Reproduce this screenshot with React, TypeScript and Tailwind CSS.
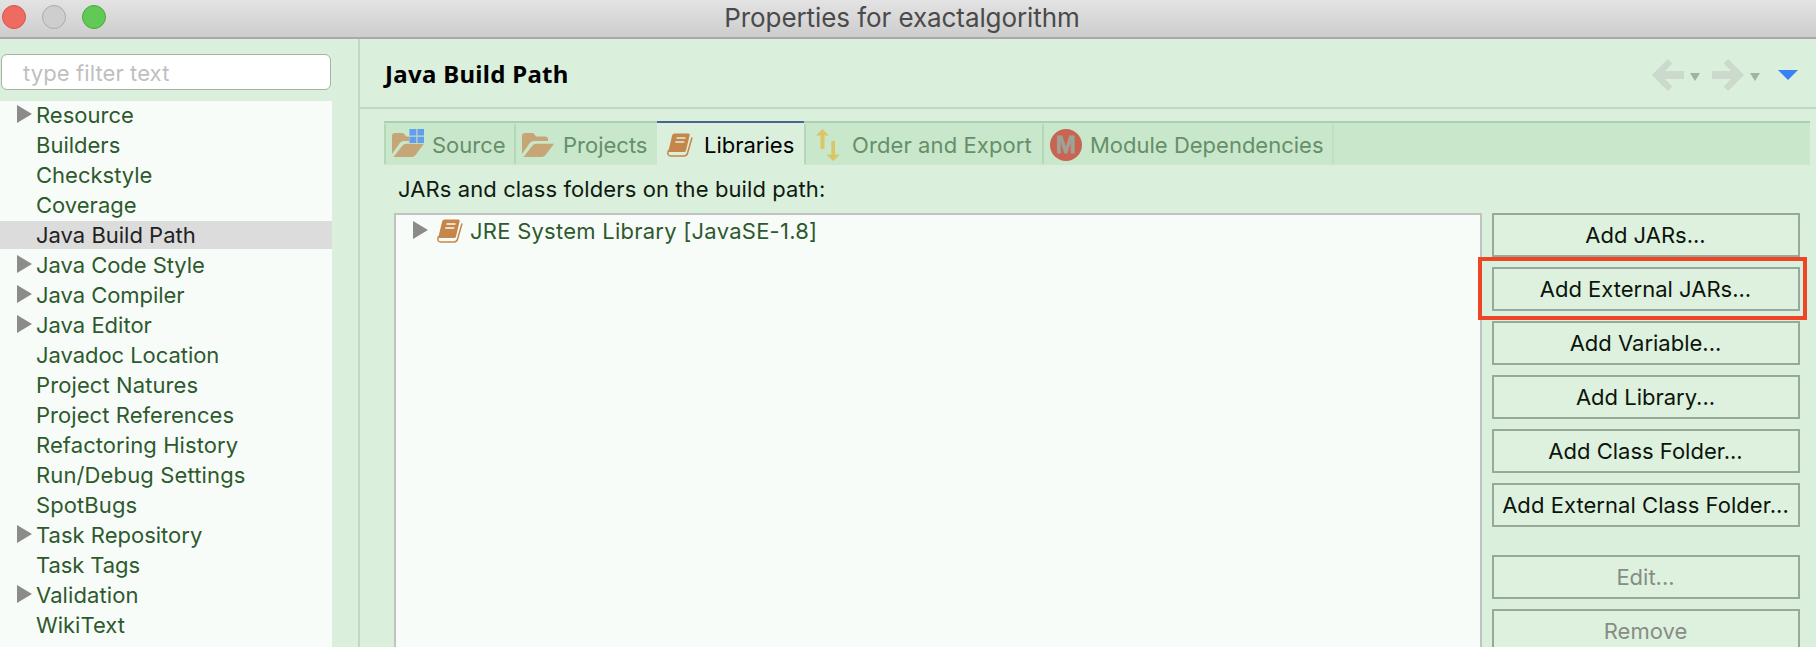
import type { ReactNode } from "react";

const NAV: { label: string; expandable?: boolean; selected?: boolean; spacing?: string }[] = [
  { label: "Resource", expandable: true },
  { label: "Builders" },
  { label: "Checkstyle" },
  { label: "Coverage" },
  { label: "Java Build Path", selected: true },
  { label: "Java Code Style", expandable: true, spacing: "tracking-[-0.05px]" },
  { label: "Java Compiler", expandable: true, spacing: "tracking-[-0.05px]" },
  { label: "Java Editor", expandable: true },
  { label: "Javadoc Location", spacing: "tracking-[-0.05px]" },
  { label: "Project Natures", spacing: "tracking-[0.1px]" },
  { label: "Project References", spacing: "tracking-[0.06px]" },
  { label: "Refactoring History", spacing: "tracking-[0.08px]" },
  { label: "Run/Debug Settings", spacing: "tracking-[0.13px]" },
  { label: "SpotBugs", spacing: "tracking-[0.1px]" },
  { label: "Task Repository", expandable: true },
  { label: "Task Tags", spacing: "tracking-[-0.1px]" },
  { label: "Validation", expandable: true, spacing: "tracking-[0.1px]" },
  { label: "WikiText" },
];

function Disclosure() {
  return (
    <svg width="15" height="18" viewBox="0 0 15 18" className="block shrink-0">
      <path d="M0 0 L15 9 L0 18 Z" fill="#8b8b8b" />
    </svg>
  );
}

function Folder({ badge = false }: { badge?: boolean }) {
  return (
    <svg width="32" height="32" viewBox="0 0 32 32" className="block shrink-0">
      <path
        d="M0 25 V7 Q0 4 3 4 H10 Q12 4 13 6 L14 7.5 H23 Q26 7.5 26 10.500 V12 H12 Q9.500 12 8 13.800 Z"
        fill="#c6a577"
      />
      <path d="M1.500 28 L10.500 16.500 Q12 14.700 14 14.700 H32 L23.500 26 Q22 28 19.500 28 Z" fill="#c6a577" />
      {badge && (
        <>
          <path d="M17 0 H32 V14.500 H17 Z" fill="#c7d5ce" />
          <path d="M17.500 0 H24.300 V6.500 H17.500 Z M25.500 0 H32 V6.500 H25.500 Z M17.500 7.700 H24.300 V14 H17.500 Z M25.500 7.700 H32 V14 H25.500 Z" fill="#5f9fec" />
        </>
      )}
    </svg>
  );
}

function Book({ page }: { page: string }) {
  return (
    <svg width="26" height="24" viewBox="0 0 26 24" className="block shrink-0">
      <path d="M7.500 0.500 H21.500 Q23 0.500 22.700 2 L19 17.500 Q18.600 19 17 19 H2.500 Q1 19 1.500 17.500 L5.200 2.200 Q5.700 0.500 7.500 0.500 Z" fill="#c6864a" />
      <path d="M1.600 17 Q-0.500 22.800 3.500 22.900 H17 Q19.800 22.900 20.500 20.300 L25 4.500" fill="none" stroke="#c6864a" strokeWidth="1.500" />
      <path d="M9.500 5 H18.500 M8.300 9 H17.300" stroke={page} strokeWidth="1.500" />
    </svg>
  );
}

function OrderArrows() {
  return (
    <svg width="24" height="32" viewBox="0 0 24 32" className="block shrink-0">
      <path d="M6.500 0 L13 6.500 H8.500 V20 H4.500 V6.500 H0 Z M15.300 12 H19 V25.500 H24 L17.200 32 L10.500 25.500 H15.300 Z" fill="#dcc565" />
    </svg>
  );
}

function ModuleBadge() {
  return (
    <span className="flex size-8 shrink-0 items-center justify-center rounded-full bg-[#c86453] font-[Liberation_Sans,sans-serif] text-[24px] font-bold leading-none text-[#9aa598] [-webkit-text-stroke:0.8px_#aa9d8c]">
      M
    </span>
  );
}

function Tab({ icon, label, className }: { icon: ReactNode; label: string; className: string }) {
  return (
    <div className={`flex h-11 shrink-0 items-center border-t-2 pt-0.5 ${className}`}>
      {icon}
      <span className="whitespace-nowrap">{label}</span>
    </div>
  );
}

function Separator({ color = "bg-[#b4d6b9]" }: { color?: string }) {
  return (
    <div className="h-11 w-0.5 shrink-0 border-t-2 border-[#aacfb0] pt-px">
      <div className={`h-10 w-0.5 ${color}`} />
    </div>
  );
}

function PushButton({ label, disabled = false, className = "" }: { label: string; disabled?: boolean; className?: string }) {
  return (
    <button
      disabled={disabled}
      className={`flex h-11 w-full shrink-0 items-center justify-center whitespace-nowrap border-2 border-[#99a999] bg-[#def1de] pr-px ${
        disabled ? "text-[#858d85]" : "text-[#0c150c]"
      } ${className}`}
    >
      {label}
    </button>
  );
}

function HistoryArrow({ flip = false }: { flip?: boolean }) {
  return (
    <svg width="32" height="32" viewBox="0 0 32 32" className={`block ${flip ? "-scale-x-100" : ""}`}>
      <path d="M0 16 L15.800 0 L20.300 4.500 L13 12 H32 V20 H13 L20.300 27.500 L15.800 32 Z" fill="#cbdacd" />
    </svg>
  );
}

function SmallTriangle() {
  return (
    <svg width="10" height="8" viewBox="0 0 10 8" className="mt-[4px] block">
      <path d="M0 0 H10 L5 8 Z" fill="#a1b3a3" />
    </svg>
  );
}

export default function App() {
  return (
    <div className="flex h-[647px] w-[1816px] flex-col overflow-hidden bg-[#daefdc] font-[Inter,sans-serif] text-[22px] leading-7">
      <header className="relative flex h-[39px] shrink-0 items-center justify-center border-b-2 border-[#aba9ac] bg-linear-to-b from-[#e3e3e3] to-[#cdcdcd]">
        <div className="absolute left-0.5 top-[5px] flex gap-4">
          <span className="size-6 rounded-full border border-[#dc5148] bg-[#ed6b60]" />
          <span className="size-6 rounded-full border border-[#ababab] bg-[#cecece]" />
          <span className="size-6 rounded-full border border-[#4aa93c] bg-[#62c956]" />
        </div>
        <h1 className="pb-0.5 pr-[12px] text-[26px] tracking-[-0.08px] text-[#4a4a4a]">Properties for exactalgorithm</h1>
      </header>

      <div className="flex min-h-0 flex-1">
        <aside className="flex w-[358px] shrink-0 flex-col pt-[15px]">
          <div className="ml-px flex h-9 w-[330px] shrink-0 items-center rounded-md border border-[#a3b2a4] bg-white pl-[21px] pt-px tracking-[0.1px] text-[#bfbfbf]">
            type filter text
          </div>
          <ul className="mt-[11px] flex w-[332px] flex-1 flex-col gap-0.5 overflow-hidden bg-[#f8fcf9]">
            {NAV.map((n) => (
              <li
                key={n.label}
                className={`flex h-7 shrink-0 items-center pl-[17px] ${
                  n.selected ? "bg-[#dcdcdc] text-[#222222]" : "text-[#2d5a2d]"
                }`}
              >
                <span className="flex w-[19px] pb-0.5">{n.expandable && <Disclosure />}</span>
                <span className={`whitespace-nowrap ${n.spacing ?? ""}`}>{n.label}</span>
              </li>
            ))}
          </ul>
        </aside>

        <main className="flex min-w-0 flex-1 flex-col border-l-2 border-[#c3d7c5]">
          <div className="flex h-[70px] shrink-0 items-center justify-between border-b-2 border-[#c3d7c5] pl-[25px] pr-[18px]">
            <h2 className="pt-0.5 font-['Noto_Sans',sans-serif] text-[24px] font-bold tracking-[0.3px] text-black">Java Build Path</h2>
            <div className="flex items-center pt-1">
              <HistoryArrow />
              <span className="ml-1.5"><SmallTriangle /></span>
              <span className="ml-3"><HistoryArrow flip /></span>
              <span className="ml-1.5"><SmallTriangle /></span>
              <svg width="20" height="10" viewBox="0 0 20 10" className="ml-[18px] block">
                <path d="M0 0 H20 L10 10 Z" fill="#3781f7" />
              </svg>
            </div>
          </div>

          <div className="ml-6 mt-3 flex h-11 w-[1426px] shrink-0 bg-[#c8e7cb] text-[#668f69]">
            <Separator />
            <Tab icon={<Folder badge />} label="Source" className="w-32 gap-2 border-[#aacfb0] pl-1.5" />
            <Separator />
            <Tab icon={<Folder />} label="Projects" className="w-[141px] gap-[9px] border-[#aacfb0] pl-1.5" />
            <Tab icon={<Book page="#daefdc" />} label="Libraries" className="w-[147px] gap-[11px] border-[#4b6591] bg-[#daefdc] pl-2.5 text-black" />
            <Separator />
            <Tab icon={<OrderArrows />} label="Order and Export" className="w-[236px] gap-3 border-[#aacfb0] pl-2.5 tracking-[0.1px]" />
            <Separator />
            <Tab icon={<ModuleBadge />} label="Module Dependencies" className="w-[288px] gap-2 border-[#aacfb0] pl-[6px]" />
            <Separator color="bg-[#bfdfc3]" />
            <div className="flex-1 border-t-2 border-[#aacfb0]" />
          </div>

          <div className="ml-[38px] mt-[10px] h-[38px] shrink-0 leading-7 tracking-[0.1px] text-[#101a10]">
            JARs and class folders on the build path:
          </div>

          <div className="ml-[34px] flex min-h-0 flex-1">
            <div className="w-[1088px] shrink-0 border-2 border-b-0 border-[#c1c3c2] bg-[#f8fcf9] pl-[17px] pt-0.5 text-[#2d5a2d]">
              <div className="flex h-7 items-center">
                <span className="pb-0.5"><Disclosure /></span>
                <span className="ml-[9px]"><Book page="#f8fcf9" /></span>
                <span className="ml-[7px] tracking-[0.25px]">JRE System Library [JavaSE-1.8]</span>
              </div>
            </div>
            <div className="ml-2.5 flex w-[308px] flex-col gap-2.5 overflow-visible">
              <PushButton label="Add JARs..." />
              <div className="relative">
                <PushButton label="Add External JARs..." />
                <div className="pointer-events-none absolute -bottom-[9px] -left-3.5 -right-[7px] -top-2.5 border-4 border-[#ed4525]" />
              </div>
              <PushButton label="Add Variable..." />
              <PushButton label="Add Library..." />
              <PushButton label="Add Class Folder..." />
              <PushButton label="Add External Class Folder..." className="tracking-[0.05px]" />
              <PushButton label="Edit..." disabled className="mt-[18px]" />
              <PushButton label="Remove" disabled />
            </div>
          </div>
        </main>
      </div>
    </div>
  );
}
